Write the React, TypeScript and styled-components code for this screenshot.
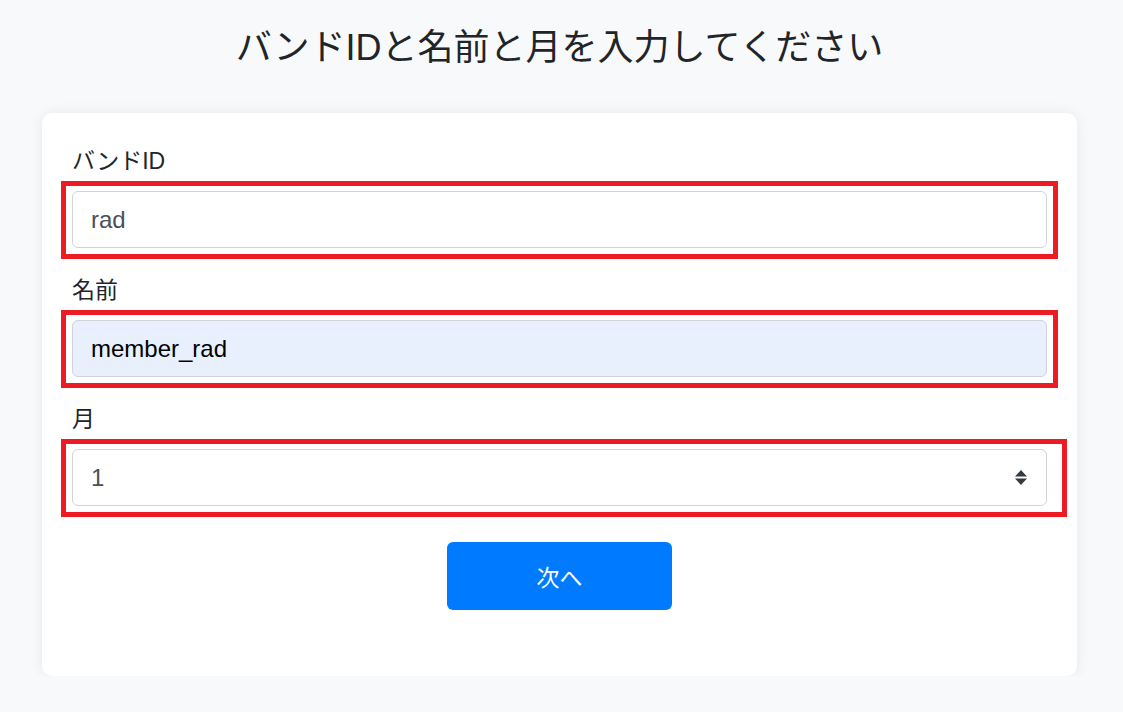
import React from "react";
import styled, { createGlobalStyle } from "styled-components";

const Global = createGlobalStyle`
  html, body { margin: 0; padding: 0; }
  body {
    background: #f8f9fa;
    font-family: "Liberation Sans", "Noto Sans CJK JP", sans-serif;
    color: #212529;
  }
`;

const Page = styled.div`
  display: flex;
  flex-direction: column;
  padding: 24px 46px 0 42px;
`;

const Title = styled.h1`
  margin: 0;
  font-size: 36px;
  font-weight: 400;
  line-height: 48px;
  text-align: center;
  color: #212529;
`;

const Card = styled.div`
  margin-top: 41px;
  background: #fff;
  border-radius: 10px;
  box-shadow: 0 0 14px rgba(0, 0, 0, 0.07);
  padding: 30px 30px 66px;
  display: flex;
  flex-direction: column;
`;

const Group = styled.div`
  display: flex;
  flex-direction: column;
  margin-bottom: 24px;
`;

const Label = styled.label`
  font-size: 23px;
  line-height: 36px;
  margin-bottom: 12px;
  color: #212529;
`;

const Field = styled.div`
  position: relative;
`;

const Highlight = styled.div<{ $right?: number }>`
  position: absolute;
  top: -10px;
  bottom: -11px;
  left: -11px;
  right: ${(p) => -(p.$right ?? 11)}px;
  border: 5px solid #ed1c24;
  pointer-events: none;
`;

const Input = styled.input<{ $filled?: boolean }>`
  box-sizing: border-box;
  display: block;
  width: 100%;
  height: 57px;
  padding: 9px 18px;
  font-family: "Liberation Sans", "Noto Sans CJK JP", sans-serif;
  font-size: 24px;
  color: ${(p) => (p.$filled ? "#000" : "#495057")};
  background: ${(p) => (p.$filled ? "#e8f0fe" : "#fff")};
  border: 1px solid #ced4da;
  border-radius: 6px;
  outline: none;
`;

const SelectBox = styled.div`
  box-sizing: border-box;
  display: flex;
  align-items: center;
  justify-content: space-between;
  height: 57px;
  padding: 9px 19px 9px 18px;
  font-size: 24px;
  color: #495057;
  background: #fff;
  border: 1px solid #ced4da;
  border-radius: 6px;
`;

const Actions = styled.div`
  display: flex;
  justify-content: center;
  margin-top: 12px;
`;

const Button = styled.button`
  width: 225px;
  height: 68px;
  border: none;
  border-radius: 6px;
  background: #007bff;
  color: #fff;
  font-family: "Liberation Sans", "Noto Sans CJK JP", sans-serif;
  font-size: 23px;
  cursor: pointer;
`;

const Arrows = () => (
  <svg width="12" height="16" viewBox="0 0 12 16">
    <path d="M6 0 L12 6.5 L0 6.5 Z M0 8.5 L12 8.5 L6 15 Z" fill="#343a40" />
  </svg>
);

export default function App() {
  return (
    <>
      <Global />
      <Page>
        <Title>バンドIDと名前と月を入力してください</Title>
        <Card>
          <Group>
            <Label>バンドID</Label>
            <Field>
              <Input defaultValue="rad" />
              <Highlight />
            </Field>
          </Group>
          <Group>
            <Label>名前</Label>
            <Field>
              <Input $filled defaultValue="member_rad" />
              <Highlight />
            </Field>
          </Group>
          <Group>
            <Label>月</Label>
            <Field>
              <SelectBox>
                <span>1</span>
                <Arrows />
              </SelectBox>
              <Highlight $right={20} />
            </Field>
          </Group>
          <Actions>
            <Button>次へ</Button>
          </Actions>
        </Card>
      </Page>
    </>
  );
}
